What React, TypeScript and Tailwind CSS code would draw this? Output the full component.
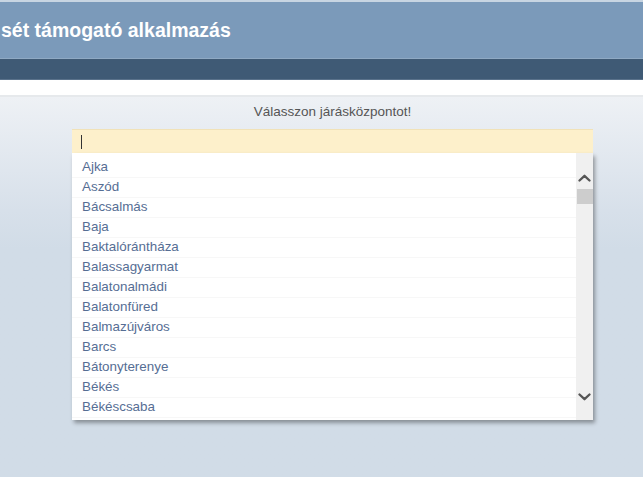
const towns = [
  'Ajka',
  'Aszód',
  'Bácsalmás',
  'Baja',
  'Baktalórántháza',
  'Balassagyarmat',
  'Balatonalmádi',
  'Balatonfüred',
  'Balmazújváros',
  'Barcs',
  'Bátonyterenye',
  'Békés',
  'Békéscsaba',
];

const Chevron = ({ up, className }: { up?: boolean; className?: string }) => (
  <svg width="13" height="8" viewBox="0 0 13 8" className={className}>
    <path
      d={up ? 'M1.5 6.5 L6.5 1.8 L11.5 6.5' : 'M1.5 1.5 L6.5 6.2 L11.5 1.5'}
      fill="none"
      stroke="#555"
      strokeWidth="2.3"
      strokeLinecap="round"
      strokeLinejoin="round"
    />
  </svg>
);

const App = () => {
  return (
    <div className="min-h-screen flex flex-col bg-[#d1dce7] font-['Liberation_Sans',Arial,sans-serif]">
      {/* Title bar */}
      <div className="h-[59px] bg-[#7b9aba] border-t-2 border-[#c8d5e2] border-b border-b-[#8fa9c3] flex items-center">
        <h1 className="text-[19.5px] font-bold text-white pl-[1px] leading-none mt-[1px]">
          sét támogató alkalmazás
        </h1>
      </div>
      <div className="h-[21px] bg-[#3f5a75] border-b border-[#5a728b]" />
      <div className="h-[17px] bg-white border-b-2 border-[#e6e9ec]" />

      {/* Content panel */}
      <div className="flex-1 bg-gradient-to-b from-[#eef1f5] via-[#d7e0ea] via-30% to-[#d1dce7] to-40%">
        <div className="ml-[72px] w-[521px] pt-[5px] text-center text-[13.5px] text-[#555] leading-[20px]">
          Válasszon járásközpontot!
        </div>

        <div className="relative ml-[72px] w-[521px] mt-[7px]">
          <div className="h-[24px] bg-[#fdf0cb] border-t border-[#f1e2b8] flex items-center pl-[9px]">
            <span className="w-px h-[14px] bg-[#333]" />
          </div>

          {/* Dropdown list */}
          <div className="absolute left-0 top-[24px] w-[521px] h-[267px] bg-white shadow-[2px_3px_4px_rgba(0,0,0,0.35)] flex overflow-hidden">
            <ul className="flex-1 pt-[5px]">
              {towns.map((t) => (
                <li
                  key={t}
                  className="h-[20px] pl-[10px] flex items-center text-[13.4px] text-[#566e94] border-b border-[#f7f7f7]"
                >
                  {t}
                </li>
              ))}
            </ul>
            <div className="w-[17px] bg-[#f0f0f0] flex flex-col items-center">
              <Chevron up className="mt-[21px]" />
              <div className="w-[16px] h-[15px] bg-[#cdcdcd] mt-[7px]" />
              <div className="flex-1" />
              <Chevron className="mb-[19px]" />
            </div>
          </div>
        </div>
      </div>
    </div>
  );
};

export default App;
